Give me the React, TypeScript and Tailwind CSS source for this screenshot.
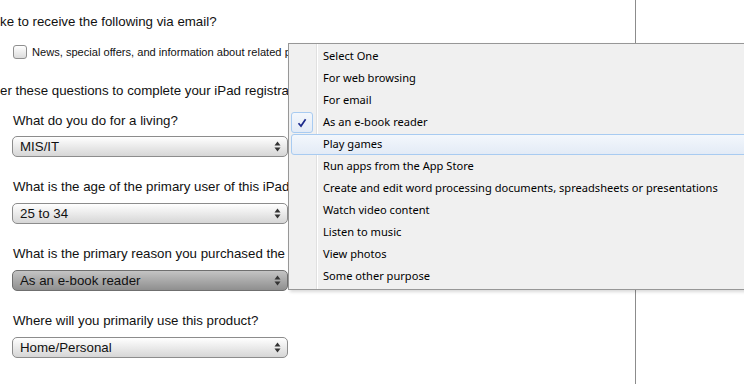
import React from "react";

function Arrows() {
  return (
    <svg width="7" height="11" viewBox="0 0 7 11" className="shrink-0">
      <path d="M3.5 0.5 L6.5 4.5 L0.5 4.5 Z" fill="#333" />
      <path d="M3.5 10.5 L6.5 6.5 L0.5 6.5 Z" fill="#333" />
    </svg>
  );
}

function Select({ value, active }: { value: string; active?: boolean }) {
  return (
    <div
      className={
        "ml-[12px] flex h-[21px] w-[276px] items-center justify-between rounded-[5px] border pl-[7px] pr-[6px] text-[13.3px] text-[#111] " +
        (active
          ? "border-[#6f6f6f] bg-gradient-to-b from-[#c4c4c4] to-[#8f8f8f]"
          : "border-[#8c8c8c] bg-gradient-to-b from-[#ffffff] to-[#d6d6d6]")
      }
    >
      <span className="leading-none">{value}</span>
      <Arrows />
    </div>
  );
}

const items = [
  "Select One",
  "For web browsing",
  "For email",
  "As an e-book reader",
  "Play games",
  "Run apps from the App Store",
  "Create and edit word processing documents, spreadsheets or presentations",
  "Watch video content",
  "Listen to music",
  "View photos",
  "Some other purpose",
];

export default function App() {
  return (
    <div
      className="relative h-[384px] w-[744px] overflow-hidden bg-white text-[#111]"
      style={{ fontFamily: '"Liberation Sans", Arial, sans-serif' }}
    >
      <div className="absolute left-[635px] top-0 h-full w-px bg-[#8c8c8c]" />

      <div className="flex flex-col whitespace-nowrap">
        <div className="mt-[14px] h-[16px] text-[13.3px] leading-[16px]">ke to receive the following via email?</div>
        <div className="mt-[14px] flex h-[16px] items-center">
          <div className="ml-[13px] h-[14px] w-[14px] rounded-[3px] border border-[#8f8f8f] bg-gradient-to-b from-[#ffffff] to-[#dcdcdc]" />
          <span className="ml-[5px] text-[11.1px] leading-[16px]">News, special offers, and information about related products</span>
        </div>
        <div className="mt-[23px] h-[16px] text-[13.3px] leading-[16px]">er these questions to complete your iPad registration.</div>
        <div className="ml-[13px] mt-[14px] h-[16px] text-[13.3px] leading-[16px]">What do you do for a living?</div>
        <div className="mt-[7px]"><Select value="MIS/IT" /></div>
        <div className="ml-[13px] mt-[22px] h-[16px] text-[13.3px] leading-[16px]">What is the age of the primary user of this iPad?</div>
        <div className="mt-[8px]"><Select value="25 to 34" /></div>
        <div className="ml-[13px] mt-[22px] h-[16px] text-[13.3px] leading-[16px]">What is the primary reason you purchased the iPad?</div>
        <div className="mt-[8px]"><Select value="As an e-book reader" active /></div>
        <div className="ml-[13px] mt-[22px] h-[16px] text-[13.3px] leading-[16px]">Where will you primarily use this product?</div>
        <div className="mt-[8px]"><Select value="Home/Personal" /></div>
      </div>

      <div
        className="absolute left-[288px] top-[43px] w-[480px] border border-[#979797] bg-[#f0f0f0] pb-[2px] pt-[1px] text-[11.1px] text-black shadow-[2px_2px_3px_rgba(0,0,0,0.15)]"
        style={{ fontFamily: '"Noto Sans", "Open Sans", sans-serif' }}
      >
        <div className="absolute bottom-0 left-[27px] top-0 w-px bg-[#e0e0e0]" />
        <div className="absolute bottom-0 left-[28px] top-0 w-px bg-white" />
        {items.map((t, i) => {
          const checked = i === 3;
          const hover = i === 4;
          return (
            <div key={t} className="relative flex h-[22px] items-center">
              {hover && (
                <div className="absolute bottom-0 left-[2px] right-[2px] top-[1px] rounded-[3px] border border-[#a8cbf1] bg-gradient-to-b from-[#f3f7fc] to-[#e3ebf6]" />
              )}
              {checked && (
                <div className="absolute left-[2px] top-[1px] flex h-[21px] w-[22px] items-center justify-center rounded-[3px] border border-[#a8cbf1] bg-gradient-to-b from-[#f3f7fc] to-[#e3ebf6]">
                  <svg width="10" height="10" viewBox="0 0 10 10">
                    <path d="M1.5 5.2 L4 8 L8.6 1.2" fill="none" stroke="#1c2b8c" strokeWidth="1.7" />
                  </svg>
                </div>
              )}
              <span className="relative ml-[34px] leading-none">{t}</span>
            </div>
          );
        })}
      </div>
    </div>
  );
}
